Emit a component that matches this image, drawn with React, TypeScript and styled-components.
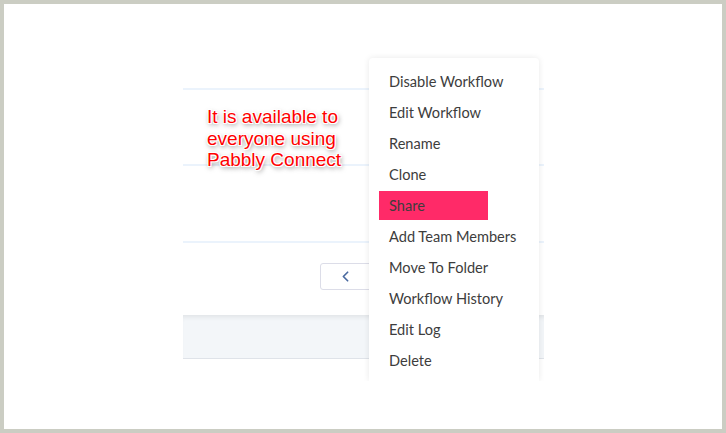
import styled, { createGlobalStyle } from 'styled-components';
import { ChevronLeft } from 'lucide-react';

const GlobalStyle = createGlobalStyle`
    html, body {
        margin: 0;
        padding: 0;
        background: #ffffff;
    }
    * {
        box-sizing: border-box;
    }
`;

const Frame = styled.div`
    position: relative;
    width: 726px;
    height: 433px;
    border: 4px solid #cbcdc3;
    background: #ffffff;
    overflow: hidden;
`;

const Panel = styled.div`
    width: 361px;
    margin: 84px 0 0 179px;
    display: flex;
    flex-direction: column;
`;

const Row = styled.div<{ $height: number }>`
    height: ${(p) => p.$height}px;
    border-top: 2px solid #ebf3fc;
`;

const PagerArea = styled.div`
    height: 74px;
    border-top: 2px solid #ebf3fc;
    display: flex;
    padding: 20px 0 0 137px;
`;

const PagerButton = styled.div`
    width: 52px;
    height: 27px;
    border: 1px solid #dcdde8;
    border-radius: 3px;
    background: #ffffff;
    display: flex;
    align-items: center;
    justify-content: center;
    padding-right: 2px;
    color: #4a6aa0;
`;

const FooterBand = styled.div`
    height: 44px;
    background: #f3f6f9;
    border-bottom: 1px solid #dfe3e9;
    box-shadow: inset 0 5px 5px -3px rgba(0, 0, 0, 0.08);
`;

const Callout = styled.div`
    position: absolute;
    left: 203px;
    top: 102px;
    font-family: 'Liberation Sans', Arial, sans-serif;
    font-size: 19px;
    line-height: 21.5px;
    color: #ff0000;
    text-shadow:
        -1px -1px 0 #fff,
        1px -1px 0 #fff,
        -1px 1px 0 #fff,
        1px 1px 0 #fff,
        1px 2px 5px rgba(0, 0, 0, 0.6);
`;

const Menu = styled.ul`
    position: absolute;
    left: 365px;
    top: 54px;
    width: 170px;
    height: 323px;
    margin: 0;
    padding: 7.5px 0 0;
    list-style: none;
    background: #ffffff;
    border-radius: 4px 4px 0 0;
    box-shadow: 0 0 6px rgba(0, 0, 0, 0.09);
    clip-path: inset(-12px -12px 0 -12px);
`;

const MenuItem = styled.li<{ $active?: boolean }>`
    height: ${(p) => (p.$active ? 29 : 31)}px;
    line-height: ${(p) => (p.$active ? 29 : 31)}px;
    margin: ${(p) => (p.$active ? '1px 51px 1px 10px' : '0')};
    padding-left: ${(p) => (p.$active ? 10 : 20)}px;
    background: ${(p) => (p.$active ? '#ff2a68' : 'transparent')};
    font-family: Lato, 'Open Sans', sans-serif;
    font-size: 14.6px;
    color: #3d3d3d;
    white-space: nowrap;
`;

const items = [
    'Disable Workflow',
    'Edit Workflow',
    'Rename',
    'Clone',
    'Share',
    'Add Team Members',
    'Move To Folder',
    'Workflow History',
    'Edit Log',
    'Delete',
];

export default function App() {
    return (
        <>
            <GlobalStyle />
            <Frame>
                <Panel>
                    <Row $height={76} />
                    <Row $height={77} />
                    <PagerArea>
                        <PagerButton>
                            <ChevronLeft size={17} strokeWidth={2.4} />
                        </PagerButton>
                    </PagerArea>
                    <FooterBand />
                </Panel>

                <Callout>
                    It is available to
                    <br />
                    everyone using
                    <br />
                    Pabbly Connect
                </Callout>

                <Menu>
                    {items.map((item) => (
                        <MenuItem key={item} $active={item === 'Share'}>
                            {item}
                        </MenuItem>
                    ))}
                </Menu>
            </Frame>
        </>
    );
}
